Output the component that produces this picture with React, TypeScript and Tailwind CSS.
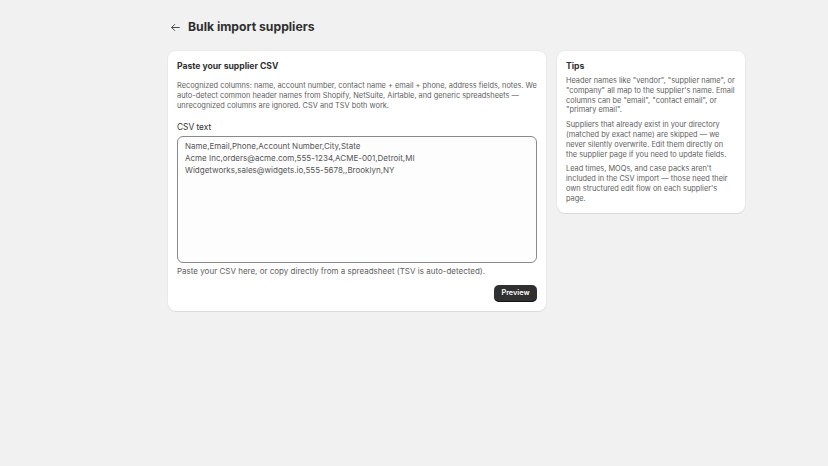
import { useState } from "react";

const csvSample = `Name,Email,Phone,Account Number,City,State
Acme Inc,orders@acme.com,555-1234,ACME-001,Detroit,MI
Widgetworks,sales@widgets.io,555-5678,,Brooklyn,NY`;

export default function App() {
  const [csv, setCsv] = useState(csvSample);

  return (
    <div className="min-h-[466px] w-full bg-[#f1f1f1] font-['Inter',sans-serif] text-[#303030]">
      <div className="ml-[168px] w-[577px] pt-[18px]">
        <div className="flex items-center h-[18px] gap-[5px]">
          <button className="w-[15px] h-[18px] flex items-center justify-center text-[#4a4a4a]">
            <svg width="11" height="11" viewBox="0 0 20 20" fill="none">
              <path
                d="M17 10H3M8.5 4.5 3 10l5.5 5.5"
                stroke="currentColor"
                strokeWidth="1.8"
                strokeLinecap="round"
                strokeLinejoin="round"
              />
            </svg>
          </button>
          <h1 className="text-[12.2px] leading-[18px] font-bold text-[#303030]">Bulk import suppliers</h1>
        </div>

        <div className="flex items-start gap-[11px] mt-[15px]">
          <div className="w-[378px] bg-white rounded-[8px] shadow-[0_1px_0_0_rgba(26,26,26,0.07),0_0_0_1px_rgba(0,0,0,0.03)] px-[9px] pt-[8px] pb-[9px]">
            <h2 className="text-[8.6px] leading-[14px] font-bold">Paste your supplier CSV</h2>
            <p className="mt-[8px] text-[7.4px] leading-[10px] text-[#616161]">
              Recognized columns: name, account number, contact name + email + phone, address fields, notes. We
              auto-detect common header names from Shopify, NetSuite, Airtable, and generic spreadsheets —
              unrecognized columns are ignored. CSV and TSV both work.
            </p>
            <label className="block mt-[10px] text-[8.3px] leading-[12px] text-[#303030]">CSV text</label>
            <textarea
              value={csv}
              onChange={(e) => setCsv(e.target.value)}
              className="mt-[3px] block w-full h-[127px] resize-none rounded-[6px] border border-[#8a8a8a] bg-[#fdfdfd] px-[7px] py-[3px] text-[8px] leading-[12px] text-[#555555] outline-none font-['Inter',sans-serif]"
            />
            <p className="mt-[2px] text-[8px] leading-[12px] text-[#616161]">
              Paste your CSV here, or copy directly from a spreadsheet (TSV is auto-detected).
            </p>
            <div className="flex justify-end mt-[8px]">
              <button className="h-[17px] w-[43px] rounded-[5px] bg-[#303030] text-white text-[7.3px] font-semibold shadow-[inset_0_-1px_0_rgba(0,0,0,0.6)]">
                Preview
              </button>
            </div>
          </div>

          <div className="w-[188px] bg-white rounded-[8px] shadow-[0_1px_0_0_rgba(26,26,26,0.07),0_0_0_1px_rgba(0,0,0,0.03)] px-[9px] pt-[8px] pb-[9px]">
            <h2 className="text-[8.6px] leading-[14px] font-bold">Tips</h2>
            <div className="mt-[3px] flex flex-col gap-[5px] text-[7.4px] leading-[9.8px] text-[#616161]">
              <p>
                Header names like "vendor", "supplier name", or "company" all map to the supplier's name. Email
                columns can be "email", "contact email", or "primary email".
              </p>
              <p>
                Suppliers that already exist in your directory (matched by exact name) are skipped — we never
                silently overwrite. Edit them directly on the supplier page if you need to update fields.
              </p>
              <p>
                Lead times, MOQs, and case packs aren't included in the CSV import — those need their own
                structured edit flow on each supplier's page.
              </p>
            </div>
          </div>
        </div>
      </div>
    </div>
  );
}
